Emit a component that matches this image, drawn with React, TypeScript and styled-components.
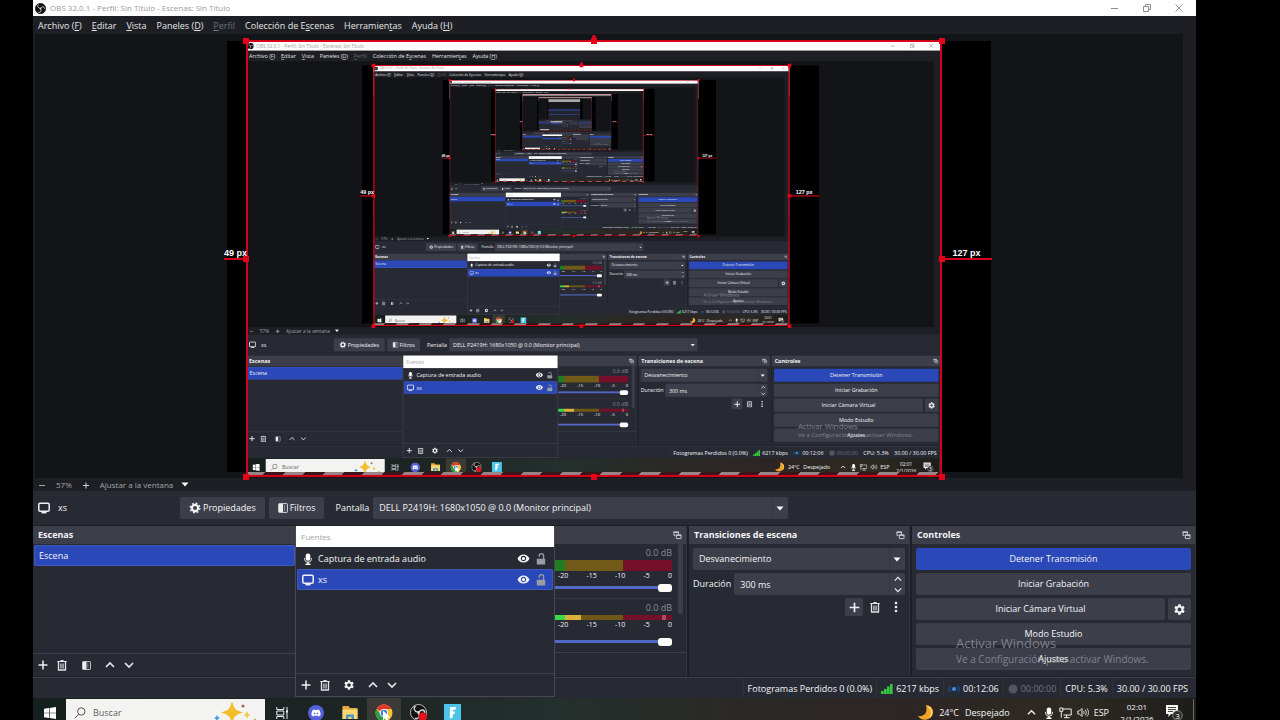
import React, { useId } from "react";
import styled, { createGlobalStyle, css } from "styled-components";
import { FaDiscord } from "react-icons/fa";
import { MdSettings, MdVisibility } from "react-icons/md";

const SCREEN_WIDTH = 1163;
const SCREEN_HEIGHT = 727;
const CAPTURE_SCALE = 0.598;
const CAPTURE_DEPTH = 6;

const c = {
  base: "#1d1f24",
  preview: "#131417",
  panel: "#272a33",
  raised: "#3c3e4a",
  line: "#3c404d",
  accent: "#2b48b8",
  text: "#f4f4f6",
  red: "#d40017",
};

const GlobalStyle = createGlobalStyle`
  * { box-sizing: border-box; }
  body { margin: 0; background: #000; }
  button, input, select { font: inherit; color: inherit; margin: 0; }
`;

const Page = styled.div`
  height: 100vh;
  overflow: hidden;
  padding: 0 84px 0 33px;
  background: #000;
`;

const ScreenRoot = styled.div`
  position: relative;
  display: flex;
  flex-direction: column;
  background: ${c.base};
  color: ${c.text};
  font: 9px/14px "Open Sans", "Noto Sans", sans-serif;
  white-space: nowrap;
`;

/* ---------- window chrome ---------- */

const TitleBar = styled.header`
  display: flex;
  align-items: center;
  gap: 4px;
  height: 16px;
  padding: 0 9px 0 2px;
  background: #fff;
  color: #9c9c9c;
  font-size: 8px;
  line-height: 12px;
`;

const Title = styled.span`
  flex: 1;
`;

const WindowButtons = styled.div`
  display: flex;
  gap: 16px;
`;

const IconButton = styled.button`
  display: grid;
  place-items: center;
  width: 14px;
  height: 14px;
  padding: 0;
  border: 0;
  background: none;
`;

const WindowButton = styled(IconButton)`
  width: 16px;
  color: #8c8c8c;
`;

const MenuBar = styled.nav`
  display: flex;
  align-items: center;
  gap: 10px;
  height: 18px;
  padding: 1px 5px 0;
`;

const MenuLink = styled.a<{ $dim?: boolean }>`
  color: ${(p) => (p.$dim ? "#6c6f76" : "#e6e6e8")};
  text-decoration: none;
`;

/* ---------- preview ---------- */

const Preview = styled.main`
  display: flex;
  justify-content: center;
  margin: 0 13px 0 2px;
  padding: 7px 0 6px;
  background: ${c.preview};
`;

const Canvas = styled.div`
  position: relative;
  flex: none;
  width: 764px;
  height: 431px;
  background: #000;
`;

const CaptureClip = styled.div`
  position: absolute;
  left: 19px;
  top: 0;
  width: 696px;
  height: 431px;
  overflow: hidden;
  pointer-events: none;
  background: linear-gradient(
    #a9a9ad 12%,
    #17181c 12% 50%,
    #26356e 50% 60%,
    #22242d 60% 75%,
    #2c3a72 75% 82%,
    #20222a 82%
  );
`;

const CaptureSurface = styled.div`
  width: ${SCREEN_WIDTH}px;
  height: ${SCREEN_HEIGHT}px;
  transform: scale(${CAPTURE_SCALE});
  transform-origin: 0 0;
`;

const Overflow = styled.div`
  position: absolute;
  left: 19px;
  top: 431px;
  width: 696px;
  height: 4px;
  background: repeating-linear-gradient(135deg, #968487 0 14px, #3a1519 14px 28px);
`;

const Selection = styled.div`
  position: absolute;
  left: 19px;
  top: -1px;
  width: 696px;
  height: 437px;
  box-shadow: inset 0 0 0 2px ${c.red};
`;

const Handle = styled.i<{ $x: "start" | "mid" | "end"; $y: "start" | "mid" | "end" }>`
  position: absolute;
  width: 6px;
  height: 6px;
  margin: -3px;
  background: #e6001a;
  left: ${(p) => ({ start: "0", mid: "50%", end: "100%" })[p.$x]};
  top: ${(p) => ({ start: "1px", mid: "50%", end: "100%" })[p.$y]};
`;

const RotateHandle = styled.i`
  position: absolute;
  left: 50%;
  top: -5px;
  width: 4px;
  height: 6px;
  margin-left: -2px;
  border-radius: 2px 2px 0 0;
  background: #e6001a;
`;

const Spacing = styled.div<{ $side: "left" | "right" }>`
  position: absolute;
  top: 210px;
  display: flex;
  align-items: flex-end;
  justify-content: center;
  ${(p) =>
    p.$side === "left"
      ? css`left: -3px; width: 23px;`
      : css`left: 714px; width: 51px;`}
  height: 9px;
  border-bottom: 2px solid ${c.red};
`;

const SpacingText = styled.b`
  font: bold 9px/10px "Liberation Sans", Roboto, sans-serif;
  color: #fff;
  text-shadow: 0 0 1px #000;
`;

/* ---------- bars ---------- */

const ZoomBar = styled.div`
  display: flex;
  align-items: center;
  gap: 10px;
  height: 13px;
  padding: 0 5px;
  color: #a3a4a8;
  font-size: 8px;
  line-height: 12px;
`;

const ZoomPicker = styled.button`
  display: flex;
  align-items: center;
  gap: 8px;
  padding: 0;
  border: 0;
  background: none;
`;

const SourceBar = styled.section`
  display: flex;
  align-items: center;
  gap: 4px;
  height: 34px;
  margin-bottom: 1px;
  padding: 0 5px;
  background: ${c.panel};
`;

const SourceName = styled.div`
  display: flex;
  align-items: center;
  gap: 8px;
  width: 138px;
`;

const PushButton = styled.button<{ $primary?: boolean; $square?: boolean }>`
  display: flex;
  align-items: center;
  justify-content: center;
  gap: 2px;
  height: 22px;
  padding: 0 ${(p) => (p.$square ? 5 : 9)}px;
  border: 0;
  border-radius: 2px;
  background: ${(p) => (p.$primary ? c.accent : c.raised)};
`;

const FieldLabel = styled.label`
  padding: 0 0 0 7px;
`;

const SelectBox = styled.div<{ $width?: number }>`
  display: grid;
  grid-template-columns: 1fr 16px;
  align-items: center;
  width: ${(p) => (p.$width ? `${p.$width}px` : "100%")};
  height: 22px;
  border-radius: 2px;
  background: ${c.raised};
  &::after {
    content: "";
    grid-area: 1 / 2;
    height: 22px;
    border-left: 1px solid #343642;
    pointer-events: none;
  }
  & > svg {
    grid-area: 1 / 2;
    pointer-events: none;
    justify-self: center;
  }
`;

const Select = styled.select`
  grid-area: 1 / 1 / 2 / 3;
  height: 22px;
  padding: 0 6px;
  border: 0;
  background: none;
  appearance: none;
  outline: none;
`;

/* ---------- docks ---------- */

const Docks = styled.div`
  display: grid;
  grid-template-columns: minmax(0, 264fr) minmax(0, 388fr) minmax(0, 221fr) minmax(0, 284fr);
  column-gap: 2px;
  height: 151px;
  padding-bottom: 1px;
`;

const Dock = styled.section`
  display: flex;
  flex-direction: column;
  background: ${c.panel};
  border-right: 1px solid #333642;
`;

const DockHeader = styled.h2`
  display: flex;
  align-items: center;
  justify-content: space-between;
  height: 18px;
  margin: 0;
  padding: 0 4px 0 5px;
  background: ${c.raised};
  font-size: 9px;
  line-height: 14px;
  font-weight: 700;
`;

const List = styled.ul`
  flex: 1;
  margin: 0;
  padding: 1px;
  list-style: none;
`;

const ListRow = styled.li<{ $active?: boolean }>`
  display: flex;
  align-items: center;
  gap: 4px;
  height: 21px;
  padding: 0 5px;
  border-radius: 2px;
  background: ${(p) => (p.$active ? c.accent : "none")};
  box-shadow: ${(p) => (p.$active ? "inset 0 0 0 1px #4059bd" : "none")};
`;

const RowName = styled.span`
  flex: 1;
`;

const Toolbar = styled.div`
  display: flex;
  align-items: center;
  gap: 5px;
  height: 23px;
  padding: 0 3px;
  border-top: 1px solid ${c.line};
  & > :nth-child(3) {
    margin: 0 5px;
  }
`;

const FloatingDock = styled.section`
  position: absolute;
  left: 262px;
  top: 526px;
  width: 260px;
  height: 171px;
  display: flex;
  flex-direction: column;
  border: 1px solid #464852;
  border-top: 0;
  background: ${c.panel};
`;

const FloatingTitle = styled.h2`
  margin: 0;
  padding: 4px 5px 3px;
  height: 21px;
  background: #fff;
  color: #a5a5a5;
  font-size: 8px;
  line-height: 14px;
  font-weight: 400;
`;

/* ---------- mixer ---------- */

const MixerBody = styled.div`
  display: flex;
  height: 109px;
  border-bottom: 1px solid ${c.line};
`;

const Channels = styled.div`
  flex: 1;
  padding-right: 6px;
`;

const Channel = styled.div`
  display: flex;
  flex-direction: column;
  align-items: flex-end;
  height: 54px;
  padding: 2px 0 0 12px;
  & + & {
    border-top: 1px solid #353843;
  }
`;

const Level = styled.output`
  color: #8a8c93;
  line-height: 14px;
`;

const Meter = styled.div<{ $live?: boolean }>`
  width: 324px;
  height: ${(p) => (p.$live ? 5 : 11)}px;
  background: ${(p) =>
    p.$live
      ? "linear-gradient(90deg, #3bd84b 67%, #dcb13b 67% 72%, #6f5817 72% 85%, #74102a 85% 97%, #b0485c 97% 98%, #74102a 98%)"
      : "linear-gradient(90deg, #1f7d23 67%, #715a18 67% 85%, #74102a 85%)"};
`;

const Scale = styled.div`
  display: flex;
  justify-content: space-between;
  width: 114px;
  height: 9px;
  font-size: 7px;
  line-height: 9px;
`;

const Volume = styled.input<{ $live?: boolean }>`
  appearance: none;
  width: 324px;
  height: 9px;
  margin-top: ${(p) => (p.$live ? 8 : 3)}px;
  background: linear-gradient(#5369c9, #5369c9) center / 100% 3px no-repeat;
  &::-webkit-slider-thumb {
    appearance: none;
    width: 14px;
    height: 8px;
    border-radius: 3px;
    background: #fff;
  }
`;

const ScrollThumb = styled.div`
  width: 5px;
  height: 70px;
  margin-right: 3px;
  border-radius: 2px;
  background: ${c.raised};
`;

/* ---------- transitions and controls ---------- */

const Form = styled.div`
  display: flex;
  flex-direction: column;
  gap: 3px;
  padding: 4px;
`;

const Row = styled.div`
  display: flex;
  align-items: center;
  gap: 3px;
  & > ${PushButton}:first-child {
    flex: 1;
  }
`;

const NumberBox = styled.div`
  display: flex;
  flex: 1;
  align-items: center;
  height: 22px;
  border-radius: 2px;
  background: ${c.raised};
`;

const NumberInput = styled.input`
  flex: 1;
  width: 0;
  min-width: 0;
  height: 20px;
  padding: 0 6px;
  border: 0;
  background: none;
  outline: none;
`;

const Spinner = styled.div`
  display: flex;
  flex-direction: column;
  width: 16px;
  border-left: 1px solid #343642;
`;

const SpinButton = styled(IconButton)`
  width: 15px;
  height: 11px;
`;

const Actions = styled.div`
  display: flex;
  justify-content: flex-end;
  gap: 3px;
`;

const ActionButton = styled(IconButton)<{ $raised?: boolean }>`
  width: 18px;
  height: 18px;
  border-radius: 2px;
  background: ${(p) => (p.$raised ? c.raised : "none")};
`;

const Watermark = styled.div`
  position: absolute;
  right: 48px;
  top: 635px;
  width: 192px;
  color: rgba(200, 202, 210, 0.5);
  font-size: 10px;
  line-height: 14px;
  pointer-events: none;
`;

const WatermarkTitle = styled.div`
  font-size: 13px;
  line-height: 17px;
`;

/* ---------- status bar ---------- */

const StatusBar = styled.footer`
  display: flex;
  justify-content: flex-end;
  height: 21px;
  padding-right: 4px;
  border-top: 1px solid ${c.line};
  background: ${c.panel};
`;

const Status = styled.span<{ $dim?: boolean }>`
  display: flex;
  align-items: center;
  gap: 3px;
  padding: 1px 4px 0;
  border-left: 1px solid #2f323d;
  color: ${(p) => (p.$dim ? "#73757d" : c.text)};
`;

/* ---------- taskbar ---------- */

const TaskBar = styled.div`
  display: flex;
  align-items: center;
  height: 29px;
  background: linear-gradient(90deg, #14201d, #1e2624 30%, #24302d 45%, #2a2925 60%, #2d2523 75%, #2d2a22 90%, #1d1c19);
`;

const StartButton = styled(IconButton)`
  width: 33px;
  height: 29px;
`;

const Search = styled.label`
  display: flex;
  align-items: center;
  gap: 7px;
  width: 199px;
  height: 28px;
  padding: 0 8px;
  background: #f3f3f2;
`;

const SearchInput = styled.input`
  flex: 1;
  min-width: 0;
  padding: 0;
  border: 0;
  background: none;
  outline: none;
  font-size: 9px;
  &::placeholder {
    color: #5f5f5f;
    opacity: 1;
  }
`;

const TaskButton = styled(IconButton)<{ $active?: boolean }>`
  width: 34px;
  height: 29px;
  background: ${(p) => (p.$active ? "#3c3a36" : "none")};
`;

const Tray = styled.div`
  display: flex;
  align-items: center;
  margin-left: auto;
  gap: 5px;
  padding-right: 2px;
`;

const Weather = styled.span`
  padding: 0 9px 0 1px;
`;

const TrayButton = styled(IconButton)`
  width: 15px;
`;

const Clock = styled.time`
  display: flex;
  flex-direction: column;
  width: 46px;
  text-align: center;
  font-size: 8px;
  line-height: 12px;
`;

const ShowDesktop = styled.span`
  width: 1px;
  height: 28px;
  margin-left: 5px;
  background: #6c6a66;
`;

/* ---------- icons ---------- */

const ObsLogo = ({ size = 11, ring = "#111", live = false }) => (
  <svg width={size} height={size} viewBox="0 0 24 24" aria-hidden>
    <circle cx="12" cy="12" r="11.3" fill="#111" stroke={ring} strokeWidth="1.4" />
    <g fill="none" stroke="#d6d6d6" strokeWidth="2">
      <path d="M11 11.500C5.500 10.500 4.500 5 8 3" />
      <path d="M12.800 11.700C15 6.800 20.500 7.500 21 12.500" />
      <path d="M12 13.200C15 17.500 11.500 22 7 20" />
    </g>
    <circle cx="12" cy="12" r="2" fill="#d6d6d6" />
    {live && <circle cx="18" cy="18" r="6" fill="#e8101c" />}
  </svg>
);

const Plus = ({ size = 10 }) => (
  <svg width={size} height={size} viewBox="0 0 10 10" aria-hidden>
    <path d="M5 .6v8.800M.6 5h8.800" stroke="#f0f0f2" strokeWidth="1.500" />
  </svg>
);

const Trash = () => (
  <svg width="10" height="11" viewBox="0 0 10 11" fill="none" stroke="#e4e4e8" aria-hidden>
    <path d="M.3 1.500h9.400M3.500.6h3" strokeWidth="1.200" />
    <path d="M1.500 2v8h7V2" strokeWidth="1.300" />
    <path d="M3.700 3.500v5M6.300 3.500v5M5 3.500v5" strokeWidth=".8" />
  </svg>
);

const FilterIcon = ({ size = 10 }) => (
  <svg width={size} height={size} viewBox="0 0 10 10" aria-hidden>
    <rect x=".6" y=".6" width="8.800" height="8.800" rx=".6" fill="none" stroke="#d8d8dc" />
    <rect x="1" y="1" width="4" height="8" fill="#eee" />
    <path d="M6.500 2v6" stroke="#8f919a" strokeWidth="1" />
  </svg>
);

const Chevron = ({ dir, size = 10 }: { dir: "up" | "down"; size?: number }) => (
  <svg width={size} height={size} viewBox="0 0 10 10" aria-hidden>
    <path
      d={dir === "up" ? "M1 7l4-4 4 4" : "M1 3l4 4 4-4"}
      fill="none"
      stroke="#e8e8ec"
      strokeWidth="1.600"
    />
  </svg>
);

const Caret = () => (
  <svg width="8" height="5" viewBox="0 0 8 5" aria-hidden>
    <path d="M.5.5h7L4 4.500z" fill="#fff" />
  </svg>
);

const Gear = ({ size = 12 }) => (
  <svg width={size} height={size} viewBox="0 0 12 12" fill="none" stroke="#f4f4f6" aria-hidden>
    <circle cx="6" cy="6" r="3.100" strokeWidth="2.200" />
    <circle cx="6" cy="6" r="4.800" strokeWidth="1.400" strokeDasharray="1.885 1.885" />
  </svg>
);

const Monitor = () => (
  <svg width="12" height="12" viewBox="0 0 12 12" fill="none" stroke="#f0f0f4" aria-hidden>
    <rect x=".8" y="1.300" width="10.400" height="8" rx="1.300" strokeWidth="1.500" />
    <path d="M3.500 10.700h5" strokeWidth="1.400" />
  </svg>
);

const Mic = ({ w = 10, h = 12 }) => (
  <svg width={w} height={h} viewBox="0 0 10 12" aria-hidden>
    <rect x="2.700" y=".5" width="4.600" height="7.200" rx="2.300" fill="#fff" />
    <path d="M1.600 5v1.200a3.400 3 0 0 0 6.800 0V5" fill="none" stroke="#ddd" strokeWidth="1" />
    <path d="M5 9v2M2.500 11.200h5" stroke="#fff" strokeWidth="1.400" />
  </svg>
);

const Unlock = () => (
  <svg width="10" height="12" viewBox="0 0 10 12" aria-hidden>
    <path d="M3.200 3.800V2.900a2.200 2.200 0 0 1 4.400 0V6" fill="none" stroke="#9a9ca3" strokeWidth="1.300" />
    <rect x=".8" y="5.800" width="8.400" height="5.700" rx=".6" fill="#9a9ca3" />
  </svg>
);

const Popout = () => (
  <svg width="9" height="9" viewBox="0 0 9 9" fill="none" stroke="#c9cad0" aria-hidden>
    <path d="M5.500 3V1.200H1v3.200h1.500" />
    <path d="M.5 1.200h5.500" strokeWidth="1.400" />
    <rect x="3.300" y="4" width="4.700" height="3.600" rx=".5" />
    <path d="M3 4.200h5.300" strokeWidth="1.400" />
  </svg>
);

const Dots = () => (
  <svg width="4" height="12" viewBox="0 0 4 12" fill="#f0f0f2" aria-hidden>
    <circle cx="2" cy="2" r="1.300" />
    <circle cx="2" cy="6" r="1.300" />
    <circle cx="2" cy="10" r="1.300" />
  </svg>
);

const Signal = () => (
  <svg width="12" height="10" viewBox="0 0 12 10" fill="#35c93f" aria-hidden>
    <path d="M0 7h2.600v3H0zM3 5h2.600v5H3zM6 2.500h2.600V10H6zM9 0h2.600v10H9z" />
  </svg>
);

const Broadcast = () => (
  <svg width="12" height="10" viewBox="0 0 12 10" fill="none" stroke="#1d4a80" aria-hidden>
    <circle cx="6" cy="5" r="2" fill="#3d8fe6" stroke="none" />
    <path d="M3.300 2.200a4 4 0 0 0 0 5.600M8.700 2.200a4 4 0 0 1 0 5.600M1.500 1.500a6 6 0 0 0 0 7M10.500 1.500a6 6 0 0 1 0 7" />
  </svg>
);

const Sparkles = () => (
  <svg width="44" height="26" viewBox="0 0 44 26" aria-hidden>
    <path d="M19 3c1.500 6 3 8 8.500 9.500C22 14 20.500 16 19 22c-1.500-6-3-8-8.500-9.500C16 11 17.500 9 19 3z" fill="#f5bd2a" stroke="#f5bd2a" strokeWidth="1.400" />
    <path d="M34 11c.8 2.500 1.300 3 3.500 4-2.200.8-2.700 1.500-3.500 4-.8-2.500-1.300-3.200-3.500-4 2.200-1 2.700-1.500 3.500-4z" fill="#f1cb54" />
    <path d="M4 15c.8 2 1.200 2.400 3 3-1.800.8-2.200 1.200-3 3-.8-1.800-1.200-2.200-3-3 1.800-.6 2.200-1 3-3z" fill="#3d9be0" />
    <circle cx="30" cy="6" r="1.600" fill="#a56a52" />
    <circle cx="42" cy="20" r="1.400" fill="#b7c46a" />
  </svg>
);

const ChromeLogo = () => (
  <svg width="18" height="18" viewBox="0 0 18 18" aria-hidden>
    <circle cx="9" cy="9" r="8.500" fill="#f5c62c" />
    <path d="M9 9L1.600 4.800A8.500 8.500 0 0 1 16.600 5H9z" fill="#e0382c" />
    <path d="M9 9l1.500 8.400A8.500 8.500 0 0 1 1.600 4.800L5.600 11z" fill="#2c9c4a" />
    <circle cx="9" cy="9" r="4" fill="#fff" />
    <circle cx="9" cy="9" r="3.200" fill="#3b78e7" />
    <path d="M8 6.500v10l2.400-2.300 1.500 3.300 1.700-.8-1.500-3.200h3.300z" fill="#fff" />
  </svg>
);

const Folder = () => (
  <svg width="16" height="15" viewBox="0 0 16 15" aria-hidden>
    <path d="M.5 1h6l1.500 2h7.500v11H.5z" fill="#e3a93a" />
    <path d="M.5 4.500h15V14H.5z" fill="#f8d775" />
    <path d="M4 14V9.500h8V14h-2.500v-2.300h-3V14z" fill="#4a94c9" />
  </svg>
);

const TaskView = () => (
  <svg width="13" height="12" viewBox="0 0 13 12" fill="none" stroke="#eee" aria-hidden>
    <path d="M.8 0v2.500h7V0M.8 12V9.500h7V12M.8 4h7v4h-7z" />
    <path d="M11 0v12" />
    <path d="M10 4.500h2" strokeWidth="2" />
  </svg>
);

const Moon = () => (
  <svg width="17" height="17" viewBox="0 0 17 17" aria-hidden>
    <path d="M9 1c8 1 9 9 4 13-4 3-10 2-12-2 6 1 10-3 8-11z" fill="#f3a32a" />
    <path d="M11 2.500c5 3 4.500 8 1.500 11" fill="none" stroke="#fbd267" strokeWidth="1.500" />
  </svg>
);

const NetIcon = () => (
  <svg width="13" height="12" viewBox="0 0 13 12" fill="none" stroke="#eee" aria-hidden>
    <path d="M3.500 2h8.700v6H4.500M7.500 8v2.500M5 10.700h5.500M.8 1h3v3.300h-3zM2.300 4.300v6.400" />
  </svg>
);

const Speaker = () => (
  <svg width="12" height="11" viewBox="0 0 12 11" fill="none" stroke="#e4e4e4" aria-hidden>
    <path d="M.8 4h1.700L5 1.500v8L2.500 7H.8z" />
    <path d="M6.500 4c.8 1 .8 2 0 3M8.200 2.700c1.500 2 1.500 3.700 0 5.600M10 1.500c2 2.700 2 5.300 0 8" />
  </svg>
);

const Notes = () => (
  <svg width="18" height="17" viewBox="0 0 18 17" aria-hidden>
    <path d="M1 1h12v9H6l-2.500 3v-3H1z" fill="#f3f3f3" />
    <path d="M3 3.500h8M3 5.500h8M3 7.500h5" stroke="#444" />
    <circle cx="12.500" cy="11.500" r="4.800" fill="#2c2c2a" stroke="#9a9a9a" strokeWidth=".8" />
    <text x="12.500" y="14.500" textAnchor="middle" fontSize="8" fill="#fff" fontFamily="Open Sans, sans-serif">3</text>
  </svg>
);

/* ---------- parts ---------- */

const menus: { label: React.ReactNode; key: string; dim?: boolean }[] = [
  { key: "file", label: <>Archivo (<u>F</u>)</> },
  { key: "edit", label: <><u>E</u>ditar</> },
  { key: "view", label: <><u>V</u>ista</> },
  { key: "docks", label: <>Paneles (<u>D</u>)</> },
  { key: "profile", label: <><u>P</u>erfil</>, dim: true },
  { key: "scenes", label: <>Colección de E<u>s</u>cenas</> },
  { key: "tools", label: <>Herramien<u>t</u>as</> },
  { key: "help", label: <>Ayuda (<u>H</u>)</> },
];

const edges = [
  ["start", "start"], ["mid", "start"], ["end", "start"],
  ["start", "mid"], ["end", "mid"],
  ["start", "end"], ["mid", "end"], ["end", "end"],
] as const;

const ListTools = ({ middle, name }: { middle: React.ReactNode; name: string }) => (
  <Toolbar>
    <IconButton aria-label={`Añadir ${name}`}><Plus /></IconButton>
    <IconButton aria-label={`Eliminar ${name}`}><Trash /></IconButton>
    <IconButton aria-label={`Opciones de ${name}`}>{middle}</IconButton>
    <IconButton aria-label="Subir"><Chevron dir="up" /></IconButton>
    <IconButton aria-label="Bajar"><Chevron dir="down" /></IconButton>
  </Toolbar>
);

const MixerChannel = ({ live, name }: { live?: boolean; name: string }) => (
  <Channel>
    <Level>0.0 dB</Level>
    <Meter $live={live} />
    <Scale>
      {["-20", "-15", "-10", "-5", "0"].map((n) => <span key={n}>{n}</span>)}
    </Scale>
    <Volume $live={live} type="range" min={0} max={100} defaultValue={100} aria-label={name} />
  </Channel>
);

const Screen = ({ depth }: { depth: number }) => {
  const id = useId();
  return (
    <ScreenRoot>
      <TitleBar>
        <ObsLogo />
        <Title>OBS 32.0.1 - Perfil: Sin Título - Escenas: Sin Título</Title>
        <WindowButtons>
          <WindowButton aria-label="Minimizar">
            <svg width="8" height="8" stroke="currentColor"><path d="M0 4.500h7" /></svg>
          </WindowButton>
          <WindowButton aria-label="Restaurar">
            <svg width="8" height="8" fill="none" stroke="currentColor"><path d="M.5 2.500h5v5h-5zM2.500 2.500v-2h5v5h-2" /></svg>
          </WindowButton>
          <WindowButton aria-label="Cerrar">
            <svg width="8" height="8" stroke="currentColor"><path d="M.5.5l7 7M7.500.5l-7 7" /></svg>
          </WindowButton>
        </WindowButtons>
      </TitleBar>

      <MenuBar>
        {menus.map((m) => (
          <MenuLink key={m.key} href={`#${m.key}`} $dim={m.dim}>{m.label}</MenuLink>
        ))}
      </MenuBar>

      <Preview>
        <Canvas>
          <CaptureClip>
            {depth > 0 && (
              <CaptureSurface><Screen depth={depth - 1} /></CaptureSurface>
            )}
          </CaptureClip>
          <Overflow />
          <Selection>
            {edges.map(([x, y]) => <Handle key={x + y} $x={x} $y={y} />)}
            <RotateHandle />
          </Selection>
          <Spacing $side="left"><SpacingText>49 px</SpacingText></Spacing>
          <Spacing $side="right"><SpacingText>127 px</SpacingText></Spacing>
        </Canvas>
      </Preview>

      <ZoomBar>
        <svg width="8" height="8" stroke="#a3a4a8"><path d="M1 4.500h6" /></svg>
        <span>57%</span>
        <svg width="8" height="8" stroke="#d0d0d4"><path d="M1 4.500h6M4 1.500v6" /></svg>
        <ZoomPicker>Ajustar a la ventana <Caret /></ZoomPicker>
      </ZoomBar>

      <SourceBar>
        <SourceName><Monitor /> xs</SourceName>
        <PushButton><Gear /> Propiedades</PushButton>
        <PushButton><FilterIcon /> Filtros</PushButton>
        <FieldLabel htmlFor={`${id}-display`}>Pantalla</FieldLabel>
        <SelectBox $width={415}>
          <Select id={`${id}-display`}>
            <option>DELL P2419H: 1680x1050 @ 0.0 (Monitor principal)</option>
          </Select>
          <Caret />
        </SelectBox>
      </SourceBar>

      <Docks>
        <Dock>
          <DockHeader>Escenas</DockHeader>
          <List><ListRow $active>Escena</ListRow></List>
          <ListTools name="escena" middle={<FilterIcon size={9} />} />
        </Dock>
        <Dock>
          <DockHeader><span /> <Popout /></DockHeader>
          <MixerBody>
            <Channels>
              <MixerChannel name="Audio del escritorio" />
              <MixerChannel name="Micrófono" live />
            </Channels>
            <ScrollThumb />
          </MixerBody>
        </Dock>
        <Dock>
          <DockHeader>Transiciones de escena <Popout /></DockHeader>
          <Form>
            <SelectBox>
              <Select aria-label="Transición"><option>Desvanecimiento</option></Select>
              <Caret />
            </SelectBox>
            <Row>
              <label htmlFor={`${id}-duration`}>Duración</label>
              <NumberBox>
                <NumberInput id={`${id}-duration`} defaultValue="300 ms" />
                <Spinner>
                  <SpinButton aria-label="Más duración"><Chevron dir="up" size={8} /></SpinButton>
                  <SpinButton aria-label="Menos duración"><Chevron dir="down" size={8} /></SpinButton>
                </Spinner>
              </NumberBox>
            </Row>
            <Actions>
              <ActionButton $raised aria-label="Añadir transición"><Plus size={11} /></ActionButton>
              <ActionButton aria-label="Eliminar transición"><Trash /></ActionButton>
              <ActionButton aria-label="Más"><Dots /></ActionButton>
            </Actions>
          </Form>
        </Dock>
        <Dock>
          <DockHeader>Controles <Popout /></DockHeader>
          <Form>
            <PushButton $primary>Detener Transmisión</PushButton>
            <PushButton>Iniciar Grabación</PushButton>
            <Row>
              <PushButton>Iniciar Cámara Virtual</PushButton>
              <PushButton $square aria-label="Configurar cámara virtual"><MdSettings size={13} /></PushButton>
            </Row>
            <PushButton>Modo Estudio</PushButton>
            <PushButton>Ajustes</PushButton>
          </Form>
        </Dock>
      </Docks>

      <StatusBar>
        <Status>Fotogramas Perdidos 0 (0.0%)</Status>
        <Status><Signal /> 6217 kbps</Status>
        <Status><Broadcast /> 00:12:06</Status>
        <Status $dim>
          <svg width="10" height="10"><circle cx="5" cy="5" r="4.500" fill="#54565e" /></svg>
          00:00:00
        </Status>
        <Status>CPU: 5.3%</Status>
        <Status>30.00 / 30.00 FPS</Status>
      </StatusBar>

      <TaskBar>
        <StartButton aria-label="Inicio">
          <svg width="12" height="12" viewBox="0 0 12 12" fill="#fff"><path d="M0 1.700l5-.7v4.700H0zM5.600.9L12 0v5.700H5.600zM0 6.300h5V11l-5-.7zM5.600 6.300H12V12l-6.400-.9z" /></svg>
        </StartButton>
        <Search>
          <svg width="12" height="12" viewBox="0 0 12 12" fill="none" stroke="#555"><circle cx="7.300" cy="4.500" r="3.700" /><path d="M4.700 7.200L.7 11.300" /></svg>
          <SearchInput placeholder="Buscar" aria-label="Buscar" />
          <Sparkles />
        </Search>
        <TaskButton aria-label="Vista de tareas"><TaskView /></TaskButton>
        <TaskButton aria-label="Discord">
          <svg width="16" height="16" viewBox="0 0 16 16"><circle cx="8" cy="8" r="8" fill="#5560dd" /><FaDiscord x={3} y={3} size={10} color="#fff" /></svg>
        </TaskButton>
        <TaskButton aria-label="Explorador"><Folder /></TaskButton>
        <TaskButton $active aria-label="Chrome"><ChromeLogo /></TaskButton>
        <TaskButton aria-label="OBS"><ObsLogo size={17} ring="#bbb" live /></TaskButton>
        <TaskButton aria-label="Fortnite">
          <svg width="17" height="17" viewBox="0 0 17 17"><rect width="17" height="17" fill="#4cc3e8" /><path d="M6 3h6l-.5 2.800H9l-.1 1.700h2l-.3 2.500H8.800L8.600 14l-2.800.5z" fill="#fff" /></svg>
        </TaskButton>
        <Tray>
          <Moon />
          <span>24°C</span>
          <Weather>Despejado</Weather>
          <TrayButton aria-label="Iconos ocultos"><Chevron dir="up" size={9} /></TrayButton>
          <Mic />
          <NetIcon />
          <Speaker />
          <span>ESP</span>
          <Clock><span>02:01</span><span>2/1/2026</span></Clock>
          <Notes />
          <ShowDesktop />
        </Tray>
      </TaskBar>

      <FloatingDock>
        <FloatingTitle>Fuentes</FloatingTitle>
        <List>
          <ListRow>
            <Mic w={12} />
            <RowName>Captura de entrada audio</RowName>
            <IconButton aria-label="Ocultar captura de entrada audio"><MdVisibility size={13} /></IconButton>
            <IconButton aria-label="Bloquear captura de entrada audio"><Unlock /></IconButton>
          </ListRow>
          <ListRow $active>
            <Monitor />
            <RowName>xs</RowName>
            <IconButton aria-label="Ocultar xs"><MdVisibility size={13} /></IconButton>
            <IconButton aria-label="Bloquear xs"><Unlock /></IconButton>
          </ListRow>
        </List>
        <ListTools name="fuente" middle={<MdSettings size={12} />} />
      </FloatingDock>

      <Watermark>
        <WatermarkTitle>Activar Windows</WatermarkTitle>
        Ve a Configuración para activar Windows.
      </Watermark>
    </ScreenRoot>
  );
};

export default function App() {
  return (
    <Page>
      <GlobalStyle />
      <Screen depth={CAPTURE_DEPTH} />
    </Page>
  );
}
